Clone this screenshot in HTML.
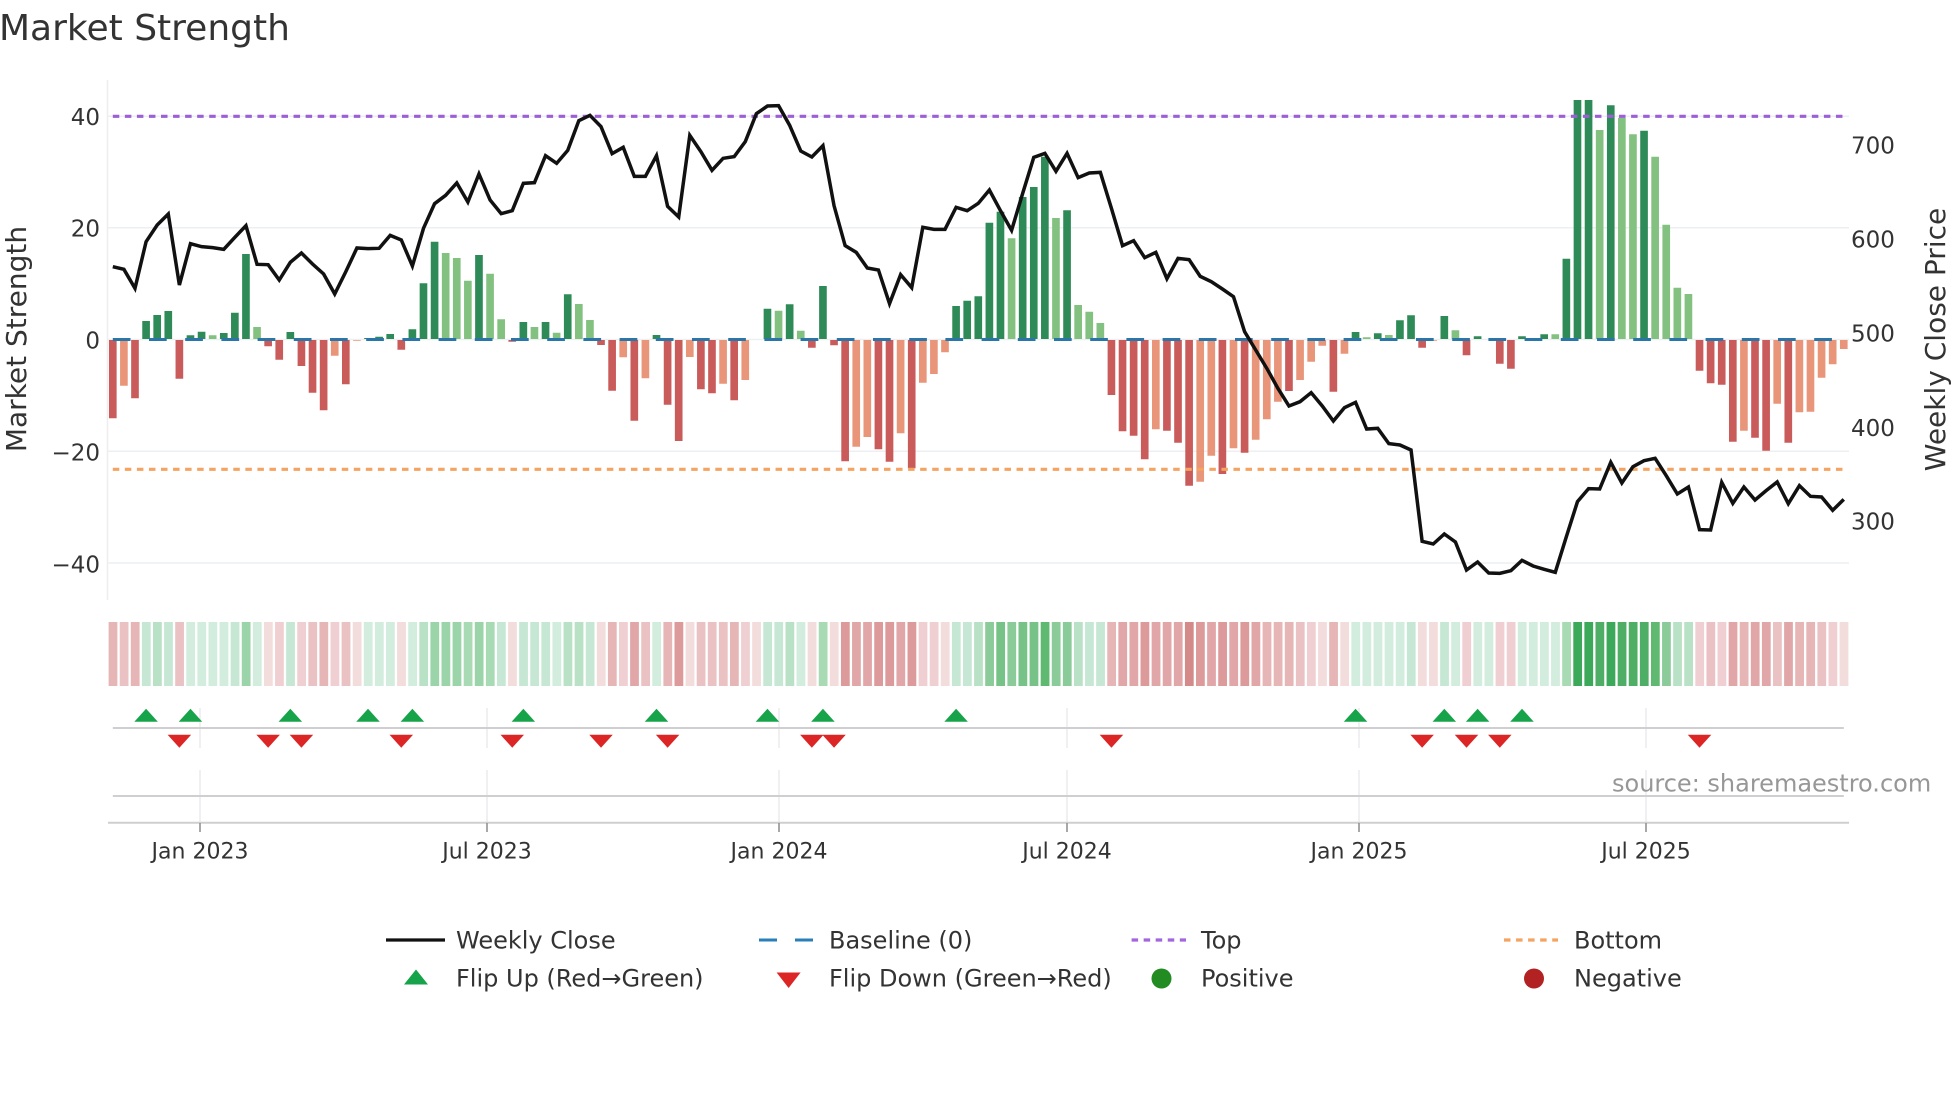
<!DOCTYPE html>
<html lang="en">
<head>
<meta charset="utf-8">
<title>Market Strength</title>
<style>
html,body{margin:0;padding:0;background:#fff;width:1960px;height:1102px;overflow:hidden}
svg{display:block}
text{font-family:"DejaVu Sans","Liberation Sans",sans-serif;fill:#333}
.t{font-size:22px}
.y{font-size:23px}
.l{font-size:24px}
</style>
</head>
<body>
<svg width="1960" height="1102" viewBox="0 0 1960 1102" xmlns="http://www.w3.org/2000/svg">
<rect width="1960" height="1102" fill="#fff"/>

<text x="-1" y="40" style="font-size:36px">Market Strength</text>

<!-- grid -->
<g stroke="#eeeff2" stroke-width="1.5" fill="none">
<path d="M108 116.3H1849M108 227.7H1849M108 339.5H1849M108 451.3H1849M108 563H1849"/>
<path d="M107.5 80V600" stroke="#eeeeee"/>
</g>

<!-- bars -->
<g transform="translate(112.8 0) scale(11.096 1)" fill="none" stroke-width=".69">
<path stroke="#2e8b57" d="M3 321V339M4 315V339M5 311V339M7 335.3V339M8 331.7V339M10 333V339M11 312.7V339M12 254V339M16 332V339M23 338V339M24 336.7V339M25 334V339M27 329.3V339M28 283.3V339M29 241.7V339M33 255V339M37 322V339M39 322V339M41 294.3V339M49 335V339M59 308.7V339M61 304.3V339M64 286V339M76 306V339M77 300.7V339M78 296.3V339M79 222.7V339M80 211.7V339M82 197V339M83 187V339M84 156.7V339M86 210.3V339M112 332V339M114 333.3V339M116 320.3V339M117 315.3V339M120 316V339M123 336.3V339M127 336.3V339M129 334.3V339M131 258.7V339M132 100V339M133 100V339M135 105.3V339M138 130.7V339"/>
<path stroke="#83c180" d="M9 335.3V339M13 327V339M30 253V339M31 258V339M32 280.7V339M34 273.7V339M35 319.3V339M38 327V339M40 332.7V339M42 304V339M43 320V339M60 310.7V339M62 330.7V339M81 238.3V339M85 218V339M87 305V339M88 311.7V339M89 323V339M113 337.3V339M115 335V339M121 330.3V339M130 334.3V339M134 130V339M136 117.7V339M137 134.3V339M139 156.7V339M140 224.7V339M141 287.7V339M142 294V339"/>
<path stroke="#c95b5b" d="M0 340V418.3M2 340V398.3M6 340V378.7M14 340V346.3M15 340V359.7M17 340V366M18 340V392.7M19 340V410.3M21 340V384.3M26 340V349.7M36 340V341.7M44 340V345M45 340V390.7M47 340V420.7M50 340V404.7M51 340V441M53 340V389.3M54 340V393.3M56 340V400.3M63 340V347.7M65 340V345.3M66 340V461.3M69 340V449.3M70 340V461.7M72 340V468.3M90 340V395M91 340V431.3M92 340V435.7M93 340V459.3M95 340V430.7M96 340V442.7M97 340V485.7M100 340V474M102 340V452.7M106 340V391M110 340V391.7M118 340V347.7M122 340V355.3M125 340V363.7M126 340V368.7M143 340V370.7M144 340V383.3M145 340V384.7M146 340V441.7M148 340V437.7M149 340V450.7M151 340V442.7"/>
<path stroke="#e8957a" d="M1 340V385.7M20 340V355.7M22 340V340.8M46 340V357.3M48 340V378.3M52 340V357M55 340V383.7M57 340V380M67 340V446.7M68 340V437M71 340V433.3M73 340V382.7M74 340V374M75 340V352.3M94 340V429.3M98 340V481.7M99 340V455.7M101 340V448.3M103 340V439.7M104 340V419.3M105 340V401.7M107 340V380M108 340V361.7M109 340V345.7M111 340V353.7M119 340V340.8M147 340V430.7M150 340V403.7M152 340V412.3M153 340V411.7M154 340V377.7M155 340V364.3M156 340V349"/>
</g>

<!-- reference lines -->
<path d="M112.8 339.5H1843.8" stroke="#2a76a8" stroke-width="3" stroke-dasharray="17.7 18.5" fill="none"/>
<path d="M112.8 116.3H1843.8" stroke="#9b5fd6" stroke-width="3.2" stroke-dasharray="6.5 5.55" fill="none"/>
<path d="M112.8 469.3H1843.8" stroke="#f4a460" stroke-width="3.2" stroke-dasharray="6.5 5.55" fill="none"/>

<!-- price -->
<polyline transform="translate(112.8 0) scale(11.096 .33333)" fill="none" stroke="#111" stroke-width="3.5" stroke-linejoin="miter" stroke-miterlimit="3" vector-effect="non-scaling-stroke" points="0,800 1,808 2,865 3,725 4,675 5,642 6,855 7,731 8,740 9,743 10,748 11,712 12,677 13,793 14,794 15,840 16,787 17,759 18,792 19,822 20,882 21,815 22,744 23,746 24,745 25,706 26,720 27,798 28,685 29,611 30,586 31,549 32,606 33,522 34,600 35,641 36,632 37,550 38,548 39,467 40,490 41,451 42,362 43,346 44,380 45,461 46,442 47,529 48,529 49,467 50,619 51,651 52,406 53,455 54,511 55,475 56,470 57,425 58,341 59,318 60,317 61,376 62,453 63,471 64,437 65,617 66,737 67,757 68,804 69,810 70,911 71,824 72,863 73,682 74,688 75,688 76,622 77,632 78,610 79,570 80,632 81,691 82,580 83,472 84,460 85,514 86,460 87,533 88,519 89,517 90,625 91,737 92,722 93,773 94,757 95,836 96,775 97,779 98,829 99,845 100,867 101,890 102,995 103,1050 104,1105 105,1165 106,1218 107,1205 108,1178 109,1218 110,1263 111,1223 112,1207 113,1287 114,1285 115,1331 116,1335 117,1350 118,1624 119,1632 120,1602 121,1626 122,1710 123,1686 124,1719 125,1720 126,1712 127,1681 128,1698 129,1708 130,1717 131,1610 132,1505 133,1466 134,1467 135,1387 136,1449 137,1400 138,1382 139,1375 140,1427 141,1482 142,1461 143,1589 144,1590 145,1447 146,1510 147,1461 148,1500 149,1472 150,1446 151,1511 152,1457 153,1489 154,1491 155,1531 156,1498"/>

<!-- y tick labels -->
<g text-anchor="end">
<text class="y" x="100" y="125">40</text>
<text class="y" x="100" y="236.300">20</text>
<text class="y" x="100" y="348.300">0</text>
<text class="y" x="100" y="460.300">−20</text>
<text class="y" x="100" y="572.300">−40</text>
</g>
<g>
<text class="y" x="1851" y="153.700">700</text>
<text class="y" x="1851" y="247.700">600</text>
<text class="y" x="1851" y="341.700">500</text>
<text class="y" x="1851" y="436">400</text>
<text class="y" x="1851" y="529.300">300</text>
</g>
<text transform="translate(26 339) rotate(-90)" text-anchor="middle" style="font-size:28px">Market Strength</text>
<text transform="translate(1945 339.5) rotate(-90)" text-anchor="middle" style="font-size:28px">Weekly Close Price</text>

<!-- heat strip -->
<g transform="translate(113 0) scale(11.096 1)" fill="none" stroke-width=".79">
<path stroke="#f3dcdc" d="M14 622V686M22 622V686M26 622V686M36 622V686M44 622V686M52 622V686M58 622V686M63 622V686M65 622V686M75 622V686M109 622V686M111 622V686M118 622V686M119 622V686M156 622V686"/>
<path stroke="#efcfd1" d="M15 622V686M17 622V686M20 622V686M46 622V686M57 622V686M73 622V686M74 622V686M108 622V686M122 622V686M125 622V686M126 622V686M143 622V686M145 622V686M155 622V686"/>
<path stroke="#eac2c3" d="M1 622V686M6 622V686M18 622V686M21 622V686M48 622V686M53 622V686M54 622V686M55 622V686M107 622V686M144 622V686M150 622V686M154 622V686"/>
<path stroke="#e6b5b6" d="M0 622V686M2 622V686M19 622V686M45 622V686M50 622V686M56 622V686M90 622V686M104 622V686M105 622V686M106 622V686M110 622V686M147 622V686M152 622V686M153 622V686"/>
<path stroke="#e1a7a8" d="M47 622V686M67 622V686M68 622V686M71 622V686M91 622V686M92 622V686M94 622V686M95 622V686M96 622V686M99 622V686M101 622V686M103 622V686M146 622V686M148 622V686M149 622V686M151 622V686"/>
<path stroke="#dc9a9a" d="M51 622V686M66 622V686M69 622V686M70 622V686M72 622V686M93 622V686M98 622V686M100 622V686M102 622V686"/>
<path stroke="#d58a8a" d="M97 622V686"/>
<path stroke="#d2ecdd" d="M7 622V686M8 622V686M9 622V686M10 622V686M13 622V686M23 622V686M24 622V686M25 622V686M27 622V686M40 622V686M49 622V686M62 622V686M112 622V686M113 622V686M114 622V686M115 622V686M116 622V686M121 622V686M123 622V686M124 622V686M127 622V686M128 622V686M129 622V686M130 622V686"/>
<path stroke="#c6e7d3" d="M3 622V686M5 622V686M11 622V686M16 622V686M35 622V686M37 622V686M38 622V686M39 622V686M43 622V686M59 622V686M60 622V686M76 622V686M77 622V686M88 622V686M89 622V686M117 622V686M120 622V686"/>
<path stroke="#b8e1c6" d="M4 622V686M28 622V686M41 622V686M42 622V686M61 622V686M78 622V686M87 622V686M141 622V686M142 622V686"/>
<path stroke="#a8dab4" d="M32 622V686M34 622V686M64 622V686M131 622V686"/>
<path stroke="#9bd4a9" d="M12 622V686M29 622V686M30 622V686M31 622V686M33 622V686"/>
<path stroke="#8bcb9a" d="M79 622V686M81 622V686M85 622V686M86 622V686M140 622V686"/>
<path stroke="#76c287" d="M80 622V686M82 622V686M83 622V686"/>
<path stroke="#60b970" d="M84 622V686M139 622V686"/>
<path stroke="#4fae65" d="M134 622V686M136 622V686M137 622V686M138 622V686"/>
<path stroke="#3ca85a" d="M132 622V686M133 622V686M135 622V686"/>
</g>

<!-- vertical grid in lower rows -->
<g stroke="#e6e6e8" stroke-width="1.2" fill="none">
<path d="M200 708V748M487 708V748M779 708V748M1067 708V748M1359 708V748M1646 708V748"/>
<path d="M200 770V823M487 770V823M779 770V823M1067 770V823M1359 770V823M1646 770V823"/>
</g>
<g stroke="#cfcfd1" stroke-width="2" fill="none">
<path d="M112.8 728H1843.8M112.8 796H1843.8"/>
<path d="M108 822.8H1849"/>
</g>

<!-- flip markers -->
<g transform="translate(112.8 0) scale(11.096 1)">
<path fill="#16a34a" d="M3 708.700l1.06 13h-2.12zM7 708.700l1.06 13h-2.12zM16 708.700l1.06 13h-2.12zM23 708.700l1.06 13h-2.12zM27 708.700l1.06 13h-2.12zM37 708.700l1.06 13h-2.12zM49 708.700l1.06 13h-2.12zM59 708.700l1.06 13h-2.12zM64 708.700l1.06 13h-2.12zM76 708.700l1.06 13h-2.12zM112 708.700l1.06 13h-2.12zM120 708.700l1.06 13h-2.12zM123 708.700l1.06 13h-2.12zM127 708.700l1.06 13h-2.12z"/>
<path fill="#dc2626" d="M6 747.700l1.06-13h-2.12zM14 747.700l1.06-13h-2.12zM17 747.700l1.06-13h-2.12zM26 747.700l1.06-13h-2.12zM36 747.700l1.06-13h-2.12zM44 747.700l1.06-13h-2.12zM50 747.700l1.06-13h-2.12zM63 747.700l1.06-13h-2.12zM65 747.700l1.06-13h-2.12zM90 747.700l1.06-13h-2.12zM118 747.700l1.06-13h-2.12zM122 747.700l1.06-13h-2.12zM125 747.700l1.06-13h-2.12zM143 747.700l1.06-13h-2.12z"/>
</g>

<!-- x ticks -->
<path d="M200 823V832M487 823V832M779 823V832M1067 823V832M1359 823V832M1646 823V832" stroke="#8c8c8c" stroke-width="1.5" fill="none"/>
<g text-anchor="middle">
<text class="t" x="200" y="858.3">Jan 2023</text>
<text class="t" x="487" y="858.3">Jul 2023</text>
<text class="t" x="779" y="858.3">Jan 2024</text>
<text class="t" x="1067" y="858.3">Jul 2024</text>
<text class="t" x="1359" y="858.3">Jan 2025</text>
<text class="t" x="1646" y="858.3">Jul 2025</text>
</g>

<text x="1612" y="791.7" style="font-size:24px;fill:#979797">source: sharemaestro.com</text>

<!-- legend -->
<path d="M386 940H445" stroke="#111" stroke-width="3.300" fill="none"/>
<path d="M759 940H777M795 940H813" stroke="#2a7fb8" stroke-width="3" fill="none"/>
<path d="M1131.6 940H1186" stroke="#a566dd" stroke-width="3.200" stroke-dasharray="6.5 5.55" fill="none"/>
<path d="M1504 940H1558" stroke="#f4a460" stroke-width="3.200" stroke-dasharray="6.5 5.55" fill="none"/>
<path d="M416 969.5l12 15h-24z" fill="#16a34a"/>
<path d="M788.6 988l12-15.500h-24z" fill="#dc2626"/>
<circle cx="1161.5" cy="978.500" r="10" fill="#228b22"/>
<circle cx="1534" cy="978.500" r="10" fill="#b22222"/>
<text class="l" x="456" y="948.3">Weekly Close</text>
<text class="l" x="829" y="948.3">Baseline (0)</text>
<text class="l" x="1201" y="948.3">Top</text>
<text class="l" x="1574" y="948.3">Bottom</text>
<text class="l" x="456" y="986.7">Flip Up (Red→Green)</text>
<text class="l" x="829" y="986.7">Flip Down (Green→Red)</text>
<text class="l" x="1201" y="986.7">Positive</text>
<text class="l" x="1574" y="986.7">Negative</text>
</svg>
</body>
</html>
